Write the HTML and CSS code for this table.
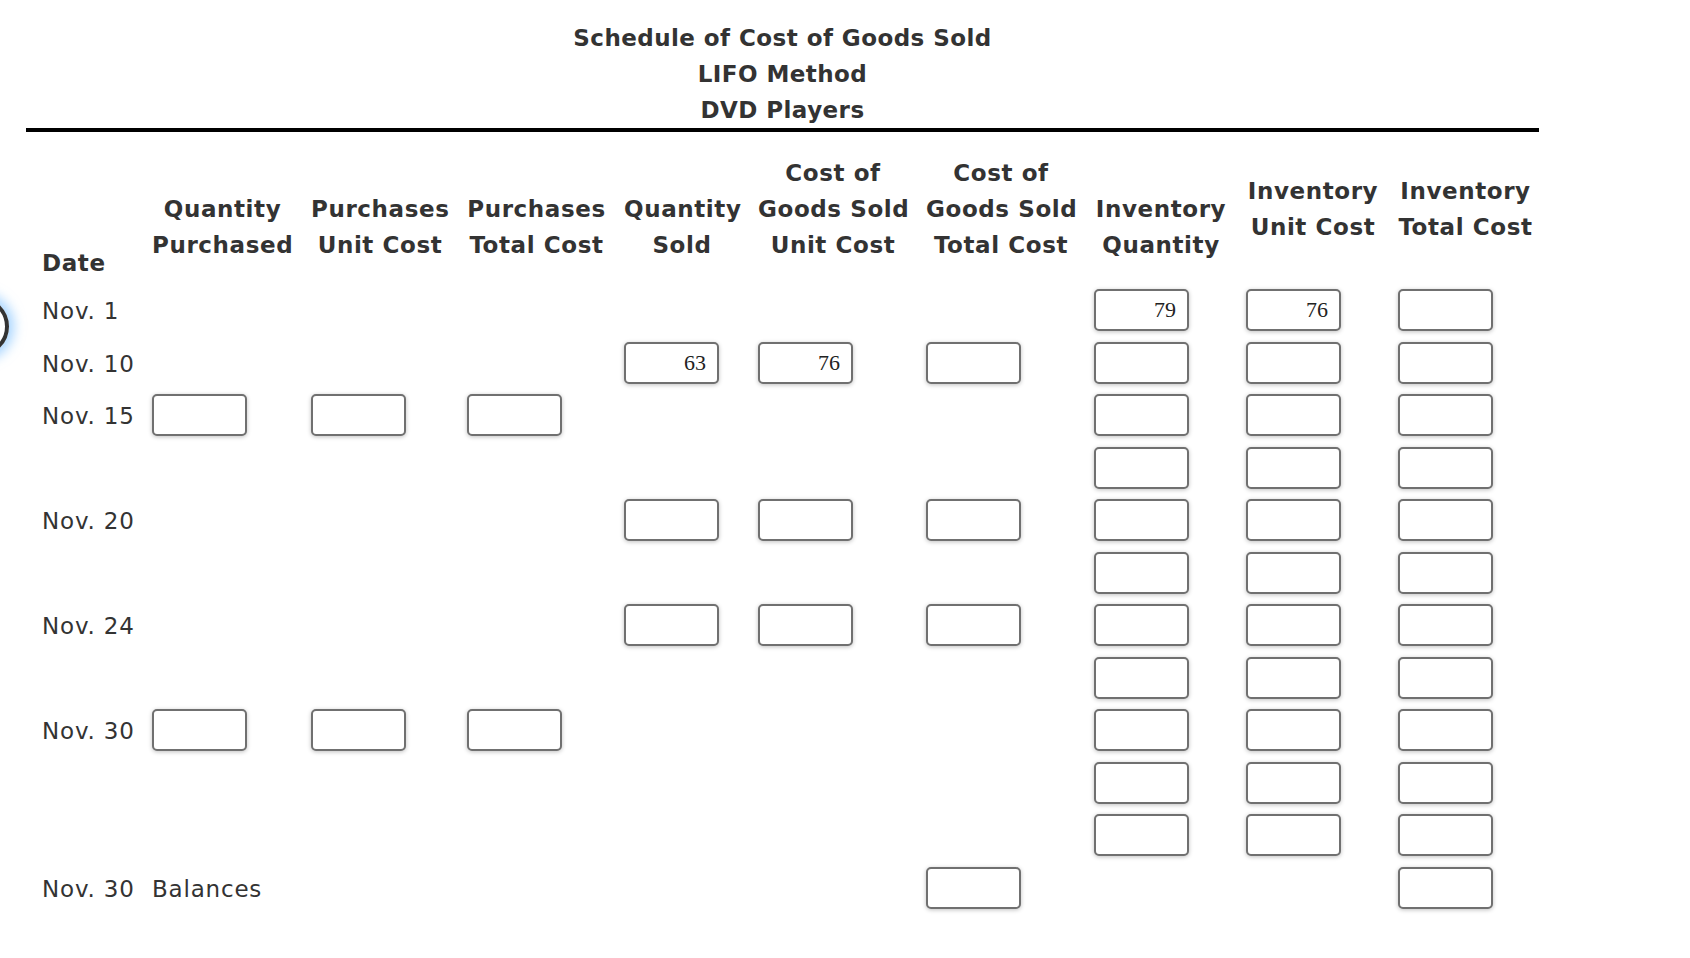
FILE: index.html
```html
<!DOCTYPE html>
<html>
<head>
<meta charset="utf-8">
<link rel="stylesheet" href="styles.css">
</head>
<body>
<div class="focus-ring"></div>
<div class="sheet">
  <div class="title">
    <div>Schedule of Cost of Goods Sold</div>
    <div>LIFO Method</div>
    <div>DVD Players</div>
  </div>

  <div class="table">
    <div class="grid head">
      <div class="hc date">Date</div>
      <div class="hc">Quantity<br>Purchased</div>
      <div class="hc">Purchases<br>Unit Cost</div>
      <div class="hc">Purchases<br>Total Cost</div>
      <div class="hc">Quantity<br>Sold</div>
      <div class="hc">Cost of<br>Goods Sold<br>Unit Cost</div>
      <div class="hc">Cost of<br>Goods Sold<br>Total Cost</div>
      <div class="hc">Inventory<br>Quantity</div>
      <div class="hc mid">Inventory<br>Unit Cost</div>
      <div class="hc mid">Inventory<br>Total Cost</div>
    </div>

    <div class="body">
      <!-- Nov. 1 -->
      <div class="grid grp">
        <div class="lbl">Nov. 1</div>
        <div class="stack"></div>
        <div class="stack"></div>
        <div class="stack"></div>
        <div class="stack"></div>
        <div class="stack"></div>
        <div class="stack"></div>
        <div class="stack"><input class="box" value="79"></div>
        <div class="stack"><input class="box" value="76"></div>
        <div class="stack"><input class="box" value=""></div>
      </div>

      <!-- Nov. 10 -->
      <div class="grid grp">
        <div class="lbl">Nov. 10</div>
        <div class="stack"></div>
        <div class="stack"></div>
        <div class="stack"></div>
        <div class="stack"><input class="box" value="63"></div>
        <div class="stack"><input class="box" value="76"></div>
        <div class="stack"><input class="box" value=""></div>
        <div class="stack"><input class="box" value=""></div>
        <div class="stack"><input class="box" value=""></div>
        <div class="stack"><input class="box" value=""></div>
      </div>

      <!-- Nov. 15 -->
      <div class="grid grp">
        <div class="lbl">Nov. 15</div>
        <div class="stack"><input class="box" value=""></div>
        <div class="stack"><input class="box" value=""></div>
        <div class="stack"><input class="box" value=""></div>
        <div class="stack"></div>
        <div class="stack"></div>
        <div class="stack"></div>
        <div class="stack"><input class="box" value=""><input class="box" value=""></div>
        <div class="stack"><input class="box" value=""><input class="box" value=""></div>
        <div class="stack"><input class="box" value=""><input class="box" value=""></div>
      </div>

      <!-- Nov. 20 -->
      <div class="grid grp">
        <div class="lbl">Nov. 20</div>
        <div class="stack"></div>
        <div class="stack"></div>
        <div class="stack"></div>
        <div class="stack"><input class="box" value=""></div>
        <div class="stack"><input class="box" value=""></div>
        <div class="stack"><input class="box" value=""></div>
        <div class="stack"><input class="box" value=""><input class="box" value=""></div>
        <div class="stack"><input class="box" value=""><input class="box" value=""></div>
        <div class="stack"><input class="box" value=""><input class="box" value=""></div>
      </div>

      <!-- Nov. 24 -->
      <div class="grid grp">
        <div class="lbl">Nov. 24</div>
        <div class="stack"></div>
        <div class="stack"></div>
        <div class="stack"></div>
        <div class="stack"><input class="box" value=""></div>
        <div class="stack"><input class="box" value=""></div>
        <div class="stack"><input class="box" value=""></div>
        <div class="stack"><input class="box" value=""><input class="box" value=""></div>
        <div class="stack"><input class="box" value=""><input class="box" value=""></div>
        <div class="stack"><input class="box" value=""><input class="box" value=""></div>
      </div>

      <!-- Nov. 30 -->
      <div class="grid grp">
        <div class="lbl">Nov. 30</div>
        <div class="stack"><input class="box" value=""></div>
        <div class="stack"><input class="box" value=""></div>
        <div class="stack"><input class="box" value=""></div>
        <div class="stack"></div>
        <div class="stack"></div>
        <div class="stack"></div>
        <div class="stack"><input class="box" value=""><input class="box" value=""><input class="box" value=""></div>
        <div class="stack"><input class="box" value=""><input class="box" value=""><input class="box" value=""></div>
        <div class="stack"><input class="box" value=""><input class="box" value=""><input class="box" value=""></div>
      </div>

      <!-- Balances -->
      <div class="grid grp">
        <div class="lbl">Nov. 30</div>
        <div class="lbl">Balances</div>
        <div class="stack"></div>
        <div class="stack"></div>
        <div class="stack"></div>
        <div class="stack"></div>
        <div class="stack"><input class="box" value=""></div>
        <div class="stack"></div>
        <div class="stack"></div>
        <div class="stack"><input class="box" value=""></div>
      </div>
    </div>
  </div>
</div>
</body>
</html>
```

FILE: styles.css
```css
html, body {
  margin: 0;
  padding: 0;
  background: #ffffff;
}

body {
  font-family: "DejaVu Sans", Verdana, sans-serif;
  font-size: 23px;
  color: #333333;
  position: relative;
  overflow: hidden;
  width: 1690px;
  height: 958px;
}

.focus-ring {
  position: absolute;
  left: -50px;
  top: 297px;
  width: 51px;
  height: 51px;
  border: 4.5px solid #333333;
  border-radius: 50%;
  box-shadow: 0 0 12px 5px rgba(110, 185, 255, 0.6);
}

.sheet {
  margin-left: 26px;
  width: 1513px;
  padding-top: 20px;
}

.title {
  text-align: center;
  font-weight: bold;
  letter-spacing: 0.45px;
  line-height: 36px;
  border-bottom: 4px solid #000000;
  padding-bottom: 0;
}

.table {
  margin-left: 16px;
  margin-top: 23px;
}

.grid {
  display: grid;
  grid-template-columns: 92px 141px 138px 139px 116px 150px 150px 134px 134px 135px;
  column-gap: 18px;
}

.head {
  align-items: end;
  font-weight: bold;
  letter-spacing: 0.6px;
  line-height: 36px;
}

.hc {
  text-align: center;
  white-space: nowrap;
  margin-bottom: 18px;
}

.hc.date {
  text-align: left;
  margin-bottom: 0;
}

.hc.mid {
  margin-bottom: 36px;
}

.body {
  display: flex;
  flex-direction: column;
  gap: 10.5px;
  margin-top: 8px;
}

.grp {
  align-items: start;
}

.lbl {
  box-sizing: border-box;
  height: 42px;
  padding-top: 3px;
  line-height: 39px;
  letter-spacing: 0.8px;
  white-space: nowrap;
}

.stack {
  display: flex;
  flex-direction: column;
  gap: 10.5px;
}

.box {
  display: block;
  box-sizing: border-box;
  width: 95px;
  height: 42px;
  margin: 0;
  border: 2px solid #707070;
  border-radius: 5px;
  box-shadow: 0 1px 4px rgba(0, 0, 0, 0.25);
  background: #ffffff;
  font-family: "Liberation Serif", "Times New Roman", serif;
  font-size: 22px;
  color: #222222;
  text-align: right;
  padding: 0 11px 0 4px;
  outline: none;
}
```
